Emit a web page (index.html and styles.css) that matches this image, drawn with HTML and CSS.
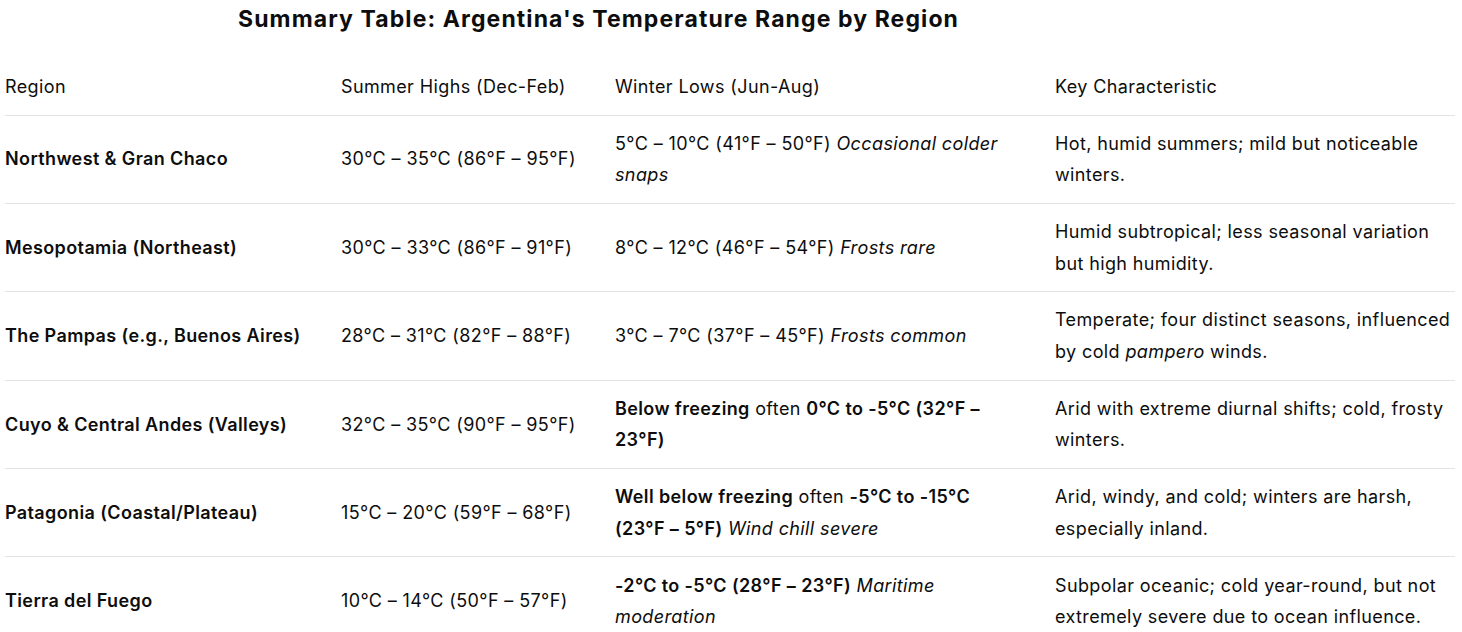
FILE: index.html
```html
<!DOCTYPE html>
<html lang="en">
<head>
<meta charset="utf-8">
<title>Summary Table</title>
<link rel="stylesheet" href="styles.css">
</head>
<body>
<h2 class="title">Summary Table: Argentina's Temperature Range by Region</h2>
<table class="summary">
  <colgroup>
    <col class="c1"><col class="c2"><col class="c3"><col class="c4">
  </colgroup>
  <thead>
    <tr><th>Region</th><th>Summer Highs (Dec-Feb)</th><th>Winter Lows (Jun-Aug)</th><th>Key Characteristic</th></tr>
  </thead>
  <tbody>
    <tr>
      <td><strong>Northwest &amp; Gran Chaco</strong></td>
      <td>30°C – 35°C (86°F – 95°F)</td>
      <td>5°C – 10°C (41°F – 50°F) <em>Occasional colder snaps</em></td>
      <td>Hot, humid summers; mild but noticeable winters.</td>
    </tr>
    <tr>
      <td><strong>Mesopotamia (Northeast)</strong></td>
      <td>30°C – 33°C (86°F – 91°F)</td>
      <td>8°C – 12°C (46°F – 54°F) <em>Frosts rare</em></td>
      <td>Humid subtropical; less seasonal variation but high humidity.</td>
    </tr>
    <tr>
      <td><strong>The Pampas (e.g., Buenos Aires)</strong></td>
      <td>28°C – 31°C (82°F – 88°F)</td>
      <td>3°C – 7°C (37°F – 45°F) <em>Frosts common</em></td>
      <td>Temperate; four distinct seasons, influenced by cold <em>pampero</em> winds.</td>
    </tr>
    <tr>
      <td><strong>Cuyo &amp; Central Andes (Valleys)</strong></td>
      <td>32°C – 35°C (90°F – 95°F)</td>
      <td><strong>Below freezing</strong> often <strong>0°C to -5°C (32°F – 23°F)</strong></td>
      <td>Arid with extreme diurnal shifts; cold, frosty winters.</td>
    </tr>
    <tr>
      <td><strong>Patagonia (Coastal/Plateau)</strong></td>
      <td>15°C – 20°C (59°F – 68°F)</td>
      <td><strong>Well below freezing</strong> often <strong>-5°C to -15°C (23°F – 5°F)</strong> <em>Wind chill severe</em></td>
      <td>Arid, windy, and cold; winters are harsh, especially inland.</td>
    </tr>
    <tr>
      <td><strong>Tierra del Fuego</strong></td>
      <td>10°C – 14°C (50°F – 57°F)</td>
      <td><strong>-2°C to -5°C (28°F – 23°F)</strong> <em>Maritime moderation</em></td>
      <td>Subpolar oceanic; cold year-round, but not extremely severe due to ocean influence.</td>
    </tr>
  </tbody>
</table>
</body>
</html>
```
FILE: styles.css
```css
html, body {
  margin: 0;
  padding: 0;
  background: #ffffff;
}
body {
  font-family: Inter, "Noto Sans", "Liberation Sans", sans-serif;
  color: #0d0d0d;
  padding: 0 5px;
}
.title {
  margin: 0;
  padding: 3px 0 0 233px;
  font-size: 23px;
  line-height: 32px;
  font-weight: 700;
  letter-spacing: 1.1px;
}
.summary {
  margin-top: 24px;
  border-collapse: collapse;
  table-layout: fixed;
  width: 1450px;
  font-size: 18px;
  line-height: 31.5px;
  letter-spacing: 0.38px;
}
.c1 { width: 336px; }
.c2 { width: 274px; }
.c3 { width: 440px; }
.c4 { width: 400px; }
.summary th {
  text-align: left;
  font-weight: 400;
  padding: 12px 20px 12px 0;
  border-bottom: 1px solid #e3e3e3;
  vertical-align: middle;
}
.summary td {
  padding: 12.2px 20px 12.2px 0;
  border-bottom: 1px solid #e3e3e3;
  vertical-align: middle;
}
.summary td:nth-child(3) {
  padding-right: 40px;
}
.summary tbody tr:last-child td {
  border-bottom: none;
}
.summary td:last-child, .summary th:last-child {
  padding-right: 0;
}
.summary strong {
  font-weight: 600;
}
```
